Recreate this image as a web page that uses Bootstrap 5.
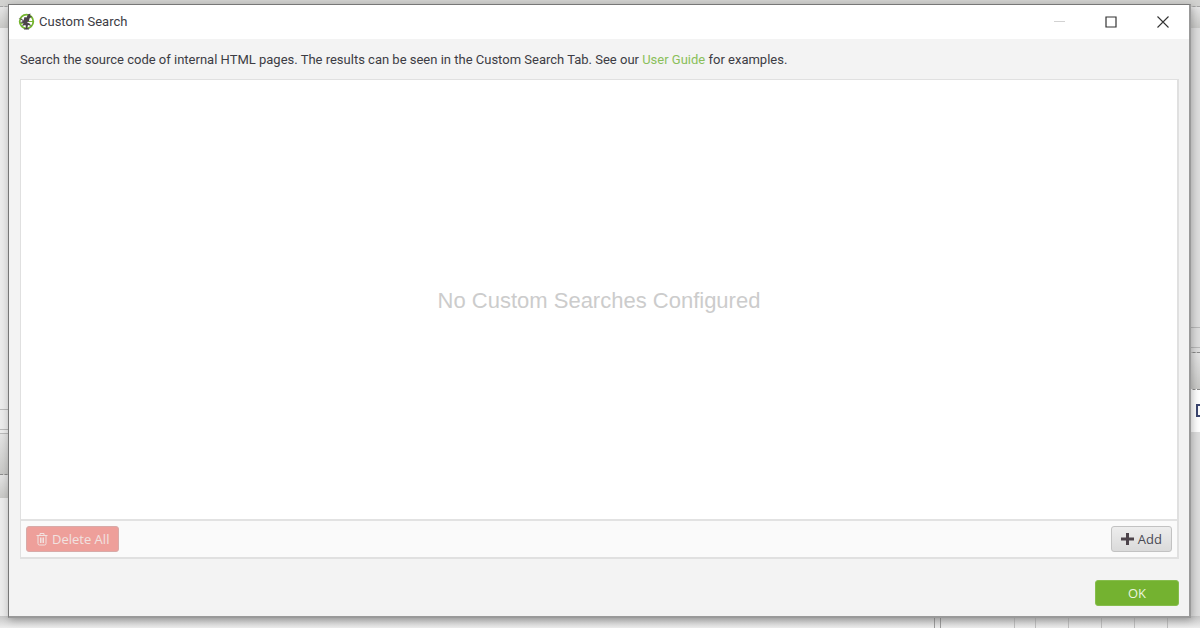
<!DOCTYPE html>
<html lang="en">
<head>
<meta charset="utf-8">
<meta name="viewport" content="width=device-width, initial-scale=1">
<title>Custom Search</title>
<link href="https://cdn.jsdelivr.net/npm/bootstrap@5.3.0/dist/css/bootstrap.min.css" rel="stylesheet">
<style>
  body { font: 13px/20px Roboto, "Open Sans", sans-serif; color: #3c3c44; background: #e4e4e4; }
  .desk { grid-template: minmax(0, 1fr) / minmax(0, 1fr); }
  .desk > * { grid-area: 1 / 1; }

  /* Application window behind the dialog */
  .behind-top { height: 6px; background: #d2d2d0; }
  .behind-tab { height: 22px; background: linear-gradient(#e6e6e6, #c9c9c7); border-top: 1px dashed #a4a4a4; }
  .rail { width: 12px; }
  .rail-left { background: #ececec; }
  .rail-right { background: #dedede; }
  .rule-line { border-top: 1px solid #b9b9b9; }
  .rule-dots { border-top: 1px dashed #8c8c8c; }
  .shade { background: linear-gradient(#e4e4e4, #c8c8c6); }
  .behind-bottom { height: 12px; background: linear-gradient(#c6c6c6, #ececec); }
  .behind-bottom .split { width: 7px; margin-right: 73px; border: solid #9b9b9b; border-width: 0 1px; }
  .behind-bottom .cells { width: 186px; }
  .behind-bottom .cells > div { width: 37px; border-left: 1px solid #bcbcbc; }
  .behind-bottom .cells > div:first-child { width: 24px; }
  .peek { width: 12px; height: 13px; border: 2px solid #3c4670; background: #fff; }

  /* Dialog */
  .dialog { margin: 4px 9px 10px 8px; background: #f3f3f3; border: 1px solid #777; border-right: 2px solid #999; border-bottom: 2px solid #999; box-shadow: 1px 2px 8px rgba(0, 0, 0, .28); }
  .titlebar { height: 34px; background: #fff; }
  .titlebar h1 { font-size: 13px; line-height: 20px; }
  .win-btn { width: 52px; height: 34px; color: #333; }
  .win-btn:disabled { color: #bbb; }
  .content-area { padding: 11px 10px 10px 11px; }
  .intro { margin-bottom: 9px; }
  .intro a { color: #8abf5a; }
  .panel { border: solid #e0e0e0; border-width: 1px 2px 2px 1px; background: #fff; }
  .empty { padding-top: 2px; font: 22px/26px "Liberation Sans", Arial, sans-serif; color: #ccc; }
  .toolbar { padding: 5px; border-top: 2px solid #e2e2e2; background: #fafafa; }
  .cmd { --bs-btn-font-family: "Open Sans", sans-serif; --bs-btn-font-size: 13px; --bs-btn-line-height: 20px; --bs-btn-padding-y: 2px; --bs-btn-padding-x: 9px; --bs-btn-border-radius: 3px; }
  .cmd-delete { --bs-btn-disabled-bg: #ee9f9a; --bs-btn-disabled-border-color: #d8aaa8; --bs-btn-disabled-color: #f1e2e0; --bs-btn-disabled-opacity: 1; }
  .cmd-add { --bs-btn-color: #4a4a54; --bs-btn-border-color: #c2c2c2; background: linear-gradient(#ededed, #dadada); }
  .cmd-ok { --bs-btn-color: #eaf5df; --bs-btn-bg: #74b230; --bs-btn-border-color: #86bd4c; --bs-btn-hover-bg: #68a228; width: 84px; margin-top: 21px; }
</style>
</head>
<body>
<div class="desk d-grid vh-100 overflow-hidden">
  <div class="d-flex flex-column" aria-hidden="true">
    <div class="behind-top"></div>
    <div class="d-flex flex-grow-1 justify-content-between">
      <div class="rail rail-left d-flex flex-column">
        <div class="behind-tab"></div>
        <div style="flex: 384"></div>
        <div class="rule-line" style="flex: 19"></div>
        <div class="rule-line" style="flex: 3"></div>
        <div class="rule-line shade" style="flex: 40"></div>
        <div class="rule-dots shade" style="flex: 23"></div>
        <div style="flex: 119"></div>
      </div>
      <div class="rail rail-right d-flex flex-column">
        <div class="behind-tab"></div>
        <div style="flex: 301"></div>
        <div class="rule-line" style="flex: 19"></div>
        <div class="rule-line" style="flex: 4"></div>
        <div class="rule-dots shade" style="flex: 36"></div>
        <div class="rule-dots bg-white d-flex align-items-center ps-2" style="flex: 43"><div class="peek flex-shrink-0"></div></div>
        <div style="flex: 185"></div>
      </div>
    </div>
    <div class="behind-bottom d-flex justify-content-end">
      <div class="split"></div>
      <div class="cells d-flex flex-shrink-0"><div></div><div></div><div></div><div></div><div></div><div class="flex-shrink-1"></div></div>
    </div>
  </div>

  <main class="dialog d-flex flex-column" role="dialog" aria-labelledby="dialog-title">
    <header class="titlebar d-flex align-items-center flex-shrink-0">
      <svg class="ms-2" width="18" height="18" viewBox="0 0 18 18" aria-hidden="true">
        <circle cx="9.500" cy="8.500" r="6.800" fill="#fff" stroke="#75b52f" stroke-width="1.800"/>
        <path d="M11 8.500h5M3 11l3-1" stroke="#75b52f" stroke-width="1.200"/>
        <path d="M1.500 5 5 6l1.500 1.500L7.500 4l2 .5L11 1.500 13.500.5 13 3l2 .5-2.500 2L12 8l-2 1.500 2.500 1 2 2.500-3.500-1-.7 3 1.700.5v1H7v-1l2-.5-.5-3-3.500 1 1.500-3-3.500-.5L6 8z" fill="#4c434a"/>
      </svg>
      <h1 class="fw-normal mb-0 ms-1 me-auto" id="dialog-title">Custom Search</h1>
      <button class="win-btn btn border-0 rounded-0 p-0 d-flex align-items-center justify-content-center" aria-label="Minimize" disabled>
        <svg width="12" height="12" viewBox="0 0 12 12"><path d="M1 5.500h11" stroke="currentColor"/></svg>
      </button>
      <button class="win-btn btn border-0 rounded-0 p-0 d-flex align-items-center justify-content-center" aria-label="Maximize">
        <svg width="12" height="12" viewBox="0 0 12 12"><path d="M1 1h10v10H1z" fill="none" stroke="currentColor" stroke-width="1.200"/></svg>
      </button>
      <button class="win-btn btn border-0 rounded-0 p-0 d-flex align-items-center justify-content-center" aria-label="Close">
        <svg width="12" height="12" viewBox="0 0 12 12"><path d="m.5.500 11 11m0-11-11 11" stroke="currentColor" stroke-width="1.100"/></svg>
      </button>
    </header>

    <div class="content-area d-flex flex-column flex-grow-1">
      <p class="intro">Search the source code of internal HTML pages. The results can be seen in the Custom Search Tab. See our <a class="text-decoration-none" href="#">User Guide</a> for examples.</p>
      <section class="panel d-flex flex-column flex-grow-1">
        <div class="empty d-flex flex-grow-1 align-items-center justify-content-center">No Custom Searches Configured</div>
        <div class="toolbar d-flex justify-content-between">
          <button class="cmd cmd-delete btn d-flex align-items-center gap-1" type="button" disabled>
            <svg width="12" height="14" viewBox="0 0 12 14" fill="none" stroke="currentColor" aria-hidden="true"><path d="M.5 3.500h11M4 3.500v-2h4v2M2 3.500v8q0 1.500 1.500 1.500h5Q10 13 10 11.500v-8M4.500 5.500v5.500M6 5.500v5.500M7.500 5.500v5.500"/></svg>
            Delete All
          </button>
          <button class="cmd cmd-add btn d-flex align-items-center gap-1" type="button">
            <svg width="13" height="12" viewBox="0 0 13 12" aria-hidden="true"><path d="M5 0h3v4.500h5v3H8V12H5V7.500H0v-3h5z" fill="#4c434a"/></svg>
            Add
          </button>
        </div>
      </section>
      <button class="cmd cmd-ok btn align-self-end" type="button">OK</button>
    </div>
  </main>
</div>
<script src="https://cdn.jsdelivr.net/npm/bootstrap@5.3.0/dist/js/bootstrap.bundle.min.js"></script>
</body>
</html>
